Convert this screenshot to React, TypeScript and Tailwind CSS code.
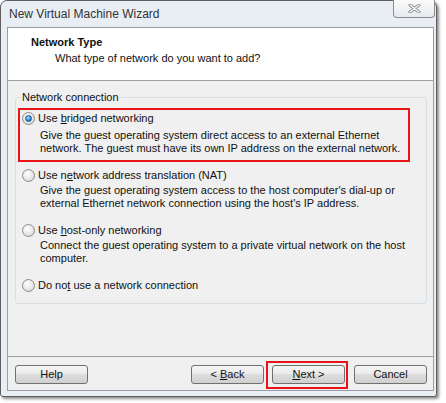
import type { ReactNode } from "react";

type OptionProps = {
  label: ReactNode;
  desc?: string[];
  checked?: boolean;
};

function Radio({ checked }: { checked?: boolean }) {
  return (
    <span className="flex h-[13px] w-[13px] shrink-0 items-center justify-center rounded-full border border-[#8c8c8c] bg-[radial-gradient(circle_at_40%_35%,#ffffff,#e4e4e4_60%,#cfcfcf)]">
      {checked && (
        <span className="h-[7px] w-[7px] rounded-full border border-[#1c5a8c] bg-[radial-gradient(circle_at_40%_35%,#a8e2ff,#2b86d0_60%,#114e86)]" />
      )}
    </span>
  );
}

function RadioOption({ label, desc, checked }: OptionProps) {
  return (
    <div>
      <div className="flex h-[13px] items-center gap-[3px]">
        <Radio checked={checked} />
        <span className="leading-[13px]">{label}</span>
      </div>
      {desc && (
        <div className={`pl-[18px] leading-[13px] ${checked ? "mt-[4px]" : "mt-[2px]"}`}>
          {desc.map((line) => (
            <div key={line}>{line}</div>
          ))}
        </div>
      )}
    </div>
  );
}

function WinButton({ children, annotate }: { children: ReactNode; annotate?: boolean }) {
  return (
    <button
      type="button"
      className="relative h-[19px] w-[73px] rounded-[3px] border border-[#707070] bg-[linear-gradient(#f4f4f4_0%,#ebebeb_50%,#dddddd_50%,#d0d0d0_100%)] text-[11px] leading-[17px] text-[#111]"
    >
      {children}
      {annotate && (
        <span className="pointer-events-none absolute -top-[5px] -bottom-[6px] -left-[7px] -right-[4px] border-2 border-[#e8141a]" />
      )}
    </button>
  );
}

export default function App() {
  return (
    <div className="h-[403px] w-[446px] bg-white font-['Liberation_Sans',Arial,sans-serif] text-[11px] text-[#111]">
      <div className="flex h-[397px] w-[437px] flex-col rounded-t-[7px] rounded-b-[3px] border border-[#5e5e5e] bg-[#e9eef5] shadow-[2px_2px_3px_rgba(0,0,0,0.45)]">
        {/* title bar */}
        <div className="flex h-[26px] items-start justify-between">
          <span className="pl-[8px] pt-[5px] text-[12px] leading-[16px] text-[#333]">
            New Virtual Machine Wizard
          </span>
          <div className="-mt-px mr-px flex h-[18px] w-[42px] items-center justify-center rounded-b-[4px] border border-t-0 border-[#8a8a8a] bg-[linear-gradient(#fbfbfb,#e6e9ee)]">
            <svg width="13" height="9" viewBox="0 0 13 9">
              <path d="M2 1 L11 8 M11 1 L2 8" stroke="#8a8a8a" strokeWidth="3" strokeLinecap="round" />
              <path d="M2 1 L11 8 M11 1 L2 8" stroke="#ffffff" strokeWidth="1.2" strokeLinecap="round" />
            </svg>
          </div>
        </div>

        {/* client area */}
        <div className="mb-[5px] ml-[6px] flex w-[427px] flex-1 flex-col border border-[#9a9ea4] bg-[#f0f0f0]">
          <div className="h-[53px] border-b border-[#a0a0a0] bg-white pl-[23px] pt-[8px]">
            <div className="font-bold leading-[13px]">Network Type</div>
            <div className="mt-[3px] pl-[24px] leading-[13px]">
              What type of network do you want to add?
            </div>
          </div>

          <div className="flex-1 px-[7px] pt-[10px]">
            <fieldset className="w-[412px] rounded-[3px] border border-[#d5dfe5] px-0 pb-[11px]">
              <legend className="ml-[4px] px-[2px] leading-[13px]">Network connection</legend>

              <div className="ml-[2px] mt-[4px] w-[392px] border-2 border-[#e8141a] pb-[5px] pl-[2px] pt-[2px]">
                <RadioOption
                  checked
                  label={
                    <>
                      Use <u>b</u>ridged networking
                    </>
                  }
                  desc={[
                    "Give the guest operating system direct access to an external Ethernet",
                    "network. The guest must have its own IP address on the external network.",
                  ]}
                />
              </div>

              <div className="mt-[7px] pl-[6px]">
                <RadioOption
                  label={
                    <>
                      Use n<u>e</u>twork address translation (NAT)
                    </>
                  }
                  desc={[
                    "Give the guest operating system access to the host computer's dial-up or",
                    "external Ethernet network connection using the host's IP address.",
                  ]}
                />
              </div>

              <div className="mt-[14px] pl-[6px]">
                <RadioOption
                  label={
                    <>
                      Use <u>h</u>ost-only networking
                    </>
                  }
                  desc={[
                    "Connect the guest operating system to a private virtual network on the host",
                    "computer.",
                  ]}
                />
              </div>

              <div className="mt-[14px] pl-[6px]">
                <RadioOption
                  label={
                    <>
                      Do no<u>t</u> use a network connection
                    </>
                  }
                />
              </div>
            </fieldset>
          </div>

          <div className="flex h-[34px] items-start border-t border-[#a0a0a0] pl-[7px] pr-[6px] pt-[8px]">
            <WinButton>Help</WinButton>
            <div className="ml-auto flex">
              <WinButton>
                &lt; <u>B</u>ack
              </WinButton>
              <div className="ml-[8px]">
                <WinButton annotate>
                  <u>N</u>ext &gt;
                </WinButton>
              </div>
              <div className="ml-[9px]">
                <WinButton>Cancel</WinButton>
              </div>
            </div>
          </div>
        </div>
      </div>
    </div>
  );
}
